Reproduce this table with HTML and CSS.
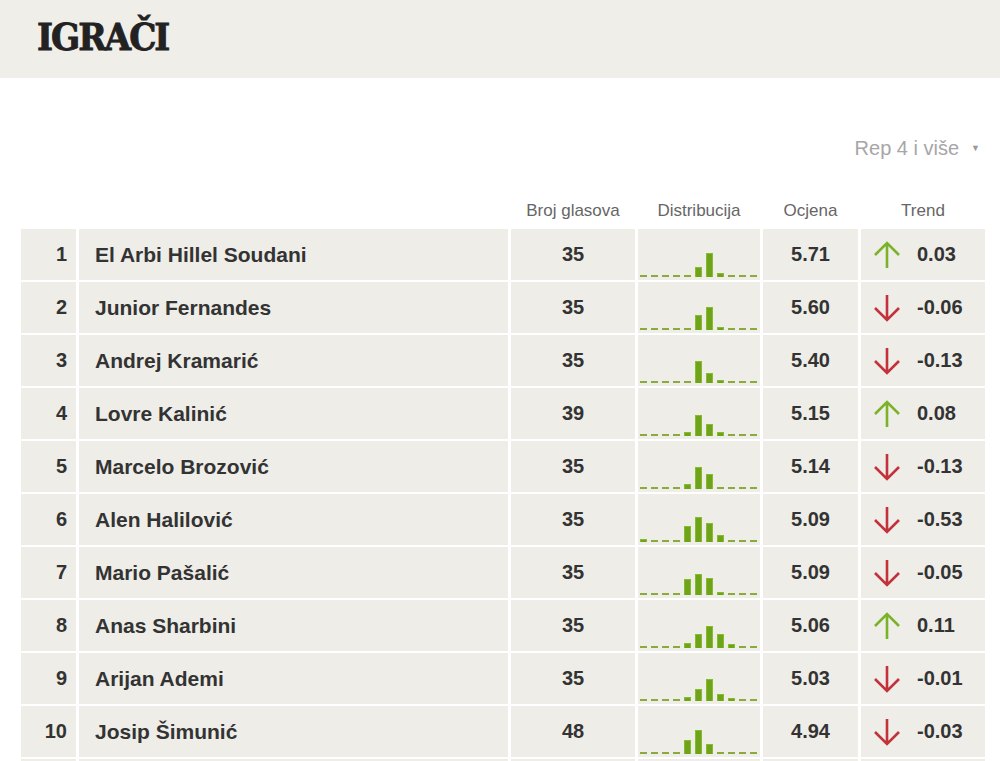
FILE: index.html
```html
<!DOCTYPE html>
<html lang="hr">
<head>
<meta charset="utf-8">
<title>Igrači</title>
<link rel="stylesheet" href="styles.css">
</head>
<body>
<header class="page-head">
  <h1 class="title">IGRAČI</h1>
</header>
<main class="content">
  <div class="filter-row">
    <span class="filter">Rep 4 i više</span>
    <span class="caret">▼</span>
  </div>
  <div class="grid labels">
    <span></span><span></span>
    <span class="lbl">Broj glasova</span>
    <span class="lbl">Distribucija</span>
    <span class="lbl">Ocjena</span>
    <span class="lbl">Trend</span>
  </div>
  <div class="rows">
    <div class="grid row">
      <div class="cell rank">1</div><div class="cell name">El Arbi Hillel Soudani</div><div class="cell num">35</div>
      <div class="cell dist"><i></i><i></i><i></i><i></i><i></i><b style="height:10px"></b><b style="height:24px"></b><b style="height:4px"></b><i></i><i></i><i></i></div>
      <div class="cell num">5.71</div>
      <div class="cell trend"><svg class="arrow up" viewBox="0 0 28 28"><path d="M14 27V2M2 14L14 2L26 14"/></svg><span>0.03</span></div>
    </div>
    <div class="grid row">
      <div class="cell rank">2</div><div class="cell name">Junior Fernandes</div><div class="cell num">35</div>
      <div class="cell dist"><i></i><i></i><i></i><i></i><i></i><b style="height:15px"></b><b style="height:23px"></b><b style="height:3px"></b><i></i><i></i><i></i></div>
      <div class="cell num">5.60</div>
      <div class="cell trend"><svg class="arrow down" viewBox="0 0 28 28"><path d="M14 1V26M2 14L14 26L26 14"/></svg><span>-0.06</span></div>
    </div>
    <div class="grid row">
      <div class="cell rank">3</div><div class="cell name">Andrej Kramarić</div><div class="cell num">35</div>
      <div class="cell dist"><i></i><i></i><i></i><i></i><i></i><b style="height:22px"></b><b style="height:10px"></b><b style="height:3px"></b><i></i><i></i><i></i></div>
      <div class="cell num">5.40</div>
      <div class="cell trend"><svg class="arrow down" viewBox="0 0 28 28"><path d="M14 1V26M2 14L14 26L26 14"/></svg><span>-0.13</span></div>
    </div>
    <div class="grid row">
      <div class="cell rank">4</div><div class="cell name">Lovre Kalinić</div><div class="cell num">39</div>
      <div class="cell dist"><i></i><i></i><i></i><i></i><b style="height:4px"></b><b style="height:21px"></b><b style="height:12px"></b><b style="height:4px"></b><i></i><i></i><i></i></div>
      <div class="cell num">5.15</div>
      <div class="cell trend"><svg class="arrow up" viewBox="0 0 28 28"><path d="M14 27V2M2 14L14 2L26 14"/></svg><span>0.08</span></div>
    </div>
    <div class="grid row">
      <div class="cell rank">5</div><div class="cell name">Marcelo Brozović</div><div class="cell num">35</div>
      <div class="cell dist"><i></i><i></i><i></i><i></i><b style="height:5px"></b><b style="height:22px"></b><b style="height:15px"></b><i></i><i></i><i></i><i></i></div>
      <div class="cell num">5.14</div>
      <div class="cell trend"><svg class="arrow down" viewBox="0 0 28 28"><path d="M14 1V26M2 14L14 26L26 14"/></svg><span>-0.13</span></div>
    </div>
    <div class="grid row">
      <div class="cell rank">6</div><div class="cell name">Alen Halilović</div><div class="cell num">35</div>
      <div class="cell dist"><b style="height:3px"></b><i></i><i></i><i></i><b style="height:16px"></b><b style="height:25px"></b><b style="height:19px"></b><b style="height:7px"></b><i></i><i></i><i></i></div>
      <div class="cell num">5.09</div>
      <div class="cell trend"><svg class="arrow down" viewBox="0 0 28 28"><path d="M14 1V26M2 14L14 26L26 14"/></svg><span>-0.53</span></div>
    </div>
    <div class="grid row">
      <div class="cell rank">7</div><div class="cell name">Mario Pašalić</div><div class="cell num">35</div>
      <div class="cell dist"><i></i><i></i><i></i><i></i><b style="height:16px"></b><b style="height:21px"></b><b style="height:17px"></b><b style="height:3px"></b><i></i><i></i><i></i></div>
      <div class="cell num">5.09</div>
      <div class="cell trend"><svg class="arrow down" viewBox="0 0 28 28"><path d="M14 1V26M2 14L14 26L26 14"/></svg><span>-0.05</span></div>
    </div>
    <div class="grid row">
      <div class="cell rank">8</div><div class="cell name">Anas Sharbini</div><div class="cell num">35</div>
      <div class="cell dist"><i></i><i></i><i></i><i></i><b style="height:5px"></b><b style="height:14px"></b><b style="height:22px"></b><b style="height:14px"></b><b style="height:4px"></b><i></i><i></i></div>
      <div class="cell num">5.06</div>
      <div class="cell trend"><svg class="arrow up" viewBox="0 0 28 28"><path d="M14 27V2M2 14L14 2L26 14"/></svg><span>0.11</span></div>
    </div>
    <div class="grid row">
      <div class="cell rank">9</div><div class="cell name">Arijan Ademi</div><div class="cell num">35</div>
      <div class="cell dist"><i></i><i></i><i></i><i></i><b style="height:4px"></b><b style="height:12px"></b><b style="height:22px"></b><b style="height:7px"></b><b style="height:3px"></b><i></i><i></i></div>
      <div class="cell num">5.03</div>
      <div class="cell trend"><svg class="arrow down" viewBox="0 0 28 28"><path d="M14 1V26M2 14L14 26L26 14"/></svg><span>-0.01</span></div>
    </div>
    <div class="grid row">
      <div class="cell rank">10</div><div class="cell name">Josip Šimunić</div><div class="cell num">48</div>
      <div class="cell dist"><i></i><i></i><i></i><i></i><b style="height:14px"></b><b style="height:24px"></b><b style="height:10px"></b><i></i><i></i><i></i><i></i></div>
      <div class="cell num">4.94</div>
      <div class="cell trend"><svg class="arrow down" viewBox="0 0 28 28"><path d="M14 1V26M2 14L14 26L26 14"/></svg><span>-0.03</span></div>
    </div>
    <div class="grid row">
      <div class="cell"></div><div class="cell"></div><div class="cell"></div><div class="cell"></div><div class="cell"></div><div class="cell"></div>
    </div>
  </div>
</main>
</body>
</html>
```
FILE: styles.css
```css
* { box-sizing: border-box; }
html, body { margin: 0; padding: 0; background: #ffffff; }
body {
  font-family: "Liberation Sans", Arial, sans-serif;
  color: #333333;
  overflow: hidden;
}
.page-head {
  height: 78px;
  background: #efeee9;
  padding-left: 37px;
  display: flex;
  align-items: center;
}
.title {
  margin: 0;
  font-family: "DejaVu Serif Condensed", "DejaVu Serif", serif;
  font-weight: bold;
  font-size: 38px;
  line-height: 1;
  color: #222222;
  letter-spacing: -2px;
  -webkit-text-stroke: 0.8px #222222;
  padding-bottom: 4px;
}
.content {
  padding-left: 21px;
}
.filter-row {
  margin-top: 58px;
  width: 964px;
  height: 24px;
  display: flex;
  align-items: center;
  justify-content: flex-end;
  gap: 12px;
  padding-right: 5px;
  color: #a6a6a6;
}
.filter { font-size: 20px; }
.caret { font-size: 9px; color: #999999; }
.grid {
  display: grid;
  grid-template-columns: 55px 429px 124px 122px 95px 124px;
  column-gap: 3px;
  width: 964px;
}
.labels {
  margin-top: 41px;
  height: 28px;
  align-items: start;
}
.lbl {
  text-align: center;
  font-size: 17px;
  line-height: 20px;
  color: #666666;
}
.rows {
  display: flex;
  flex-direction: column;
  gap: 2px;
}
.row { height: 51px; }
.cell {
  background: #eeede8;
  display: flex;
  align-items: center;
  font-size: 20px;
  font-weight: bold;
  color: #333333;
}
.rank { justify-content: flex-end; padding-right: 9px; }
.name { padding-left: 16px; font-size: 21px; }
.num { justify-content: center; }
.dist {
  align-items: flex-end;
  gap: 4px;
  padding: 0 0 3px 2px;
}
.dist i {
  display: block;
  width: 7px;
  height: 2px;
  background: #8aaa3c;
}
.dist b {
  display: block;
  width: 7px;
  background: #6fa41a;
  border: 1px solid #86bb2e;
  border-bottom: 0;
}
.trend { padding-left: 12px; gap: 16px; }
.arrow {
  width: 28px;
  height: 28px;
  fill: none;
  stroke-width: 2.6;
  stroke-linecap: butt;
}
.arrow.up { stroke: #7bb22a; }
.arrow.down { stroke: #c3313b; }
```
